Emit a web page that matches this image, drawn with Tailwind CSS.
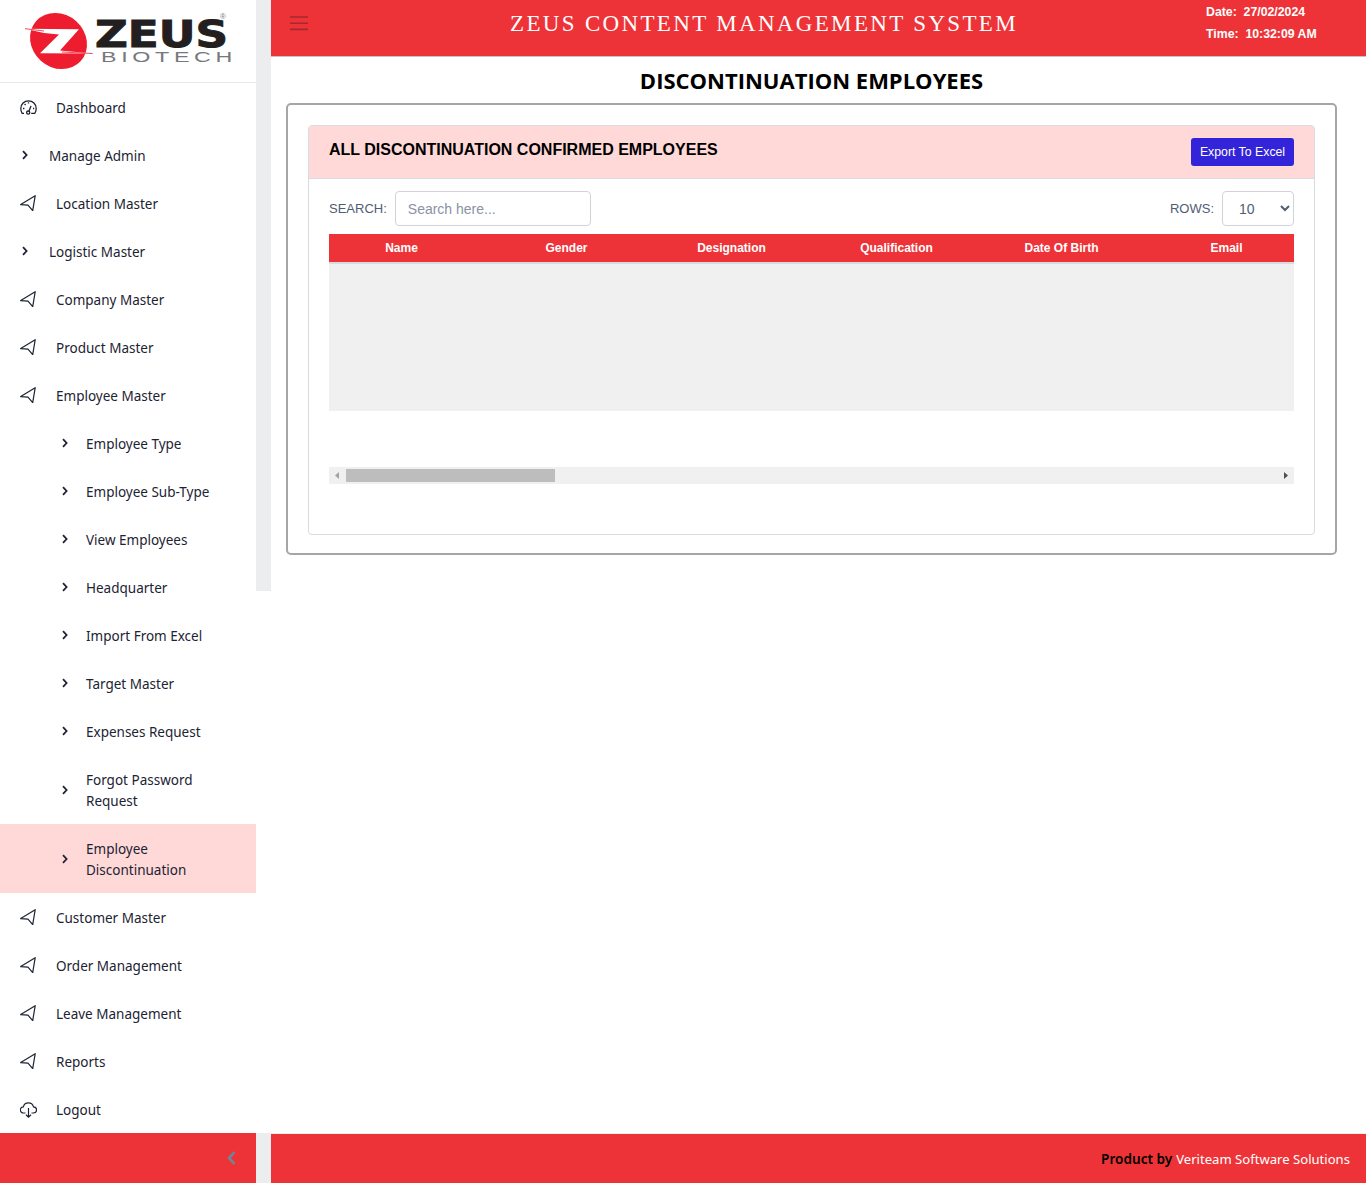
<!DOCTYPE html>
<html lang="en">
<head>
    <meta charset="UTF-8">
    <meta name="viewport" content="width=device-width, initial-scale=1.0">
    <title>Discontinuation Employees</title>
    <script src="https://cdn.jsdelivr.net/npm/@tailwindcss/browser@4"></script>
</head>
<body class="bg-white font-['Noto_Sans',sans-serif]">
    <!-- shared icons -->
    <svg class="hidden">
        <symbol id="plane" viewBox="0 0 16 16"><path d="M15.2 .7 .7 9.6 8 10.2 12.7 15.6Z" fill="none" stroke="currentColor" stroke-width="1.2" stroke-linejoin="round"/></symbol>
        <symbol id="chev" viewBox="0 0 6 10"><path d="M1 1.2 4.6 5 1 8.8" fill="none" stroke="currentColor" stroke-width="1.8"/></symbol>
    </svg>

    <div class="flex h-[1183px] w-[1366px] overflow-hidden">
        <aside class="w-[256px] h-full flex flex-col text-[#1c2333] text-[13.5px] leading-[21px]">
            <div class="h-[83px] shrink-0 border-b border-[#e8e8e8]">
                <svg width="256" height="82" viewBox="0 0 256 82">
                    <ellipse cx="58.5" cy="41" rx="30" ry="26.5" transform="rotate(42 58.5 41)" fill="#ed1c2e"/>
                    <path d="M25 28.7 79 29.3 60 50.5 92.7 53.5 40 53.3 59 34.5 44 33Z" fill="#fff"/>
                    <path d="M25 28.7 44 31 M92.7 53.5 62 52" stroke="#ed1c2e" stroke-width=".8"/>
                    <text x="95" y="47" textLength="133" lengthAdjust="spacingAndGlyphs" font-family="DejaVu Sans" font-weight="700" font-size="37" fill="#231f20" stroke="#231f20" stroke-width="1">ZEUS</text>
                    <text x="101" y="62" textLength="136" lengthAdjust="spacingAndGlyphs" letter-spacing="3" font-family="Liberation Sans" font-size="15" fill="#77787b">BIOTECH</text>
                    <text x="220" y="19" font-family="Liberation Sans" font-size="8" fill="#777">®</text>
                </svg>
            </div>
            <nav class="flex-1 min-h-0 [&_span]:mt-[2px]">
                <a class="flex items-center h-[48px] pl-[20px]">
                    <svg class="w-[17px] h-[15px] mr-[19px]" viewBox="0 0 17 15" fill="none" stroke="currentColor" stroke-width="1.3"><path d="M4 13.3H2.2A9 8.6 0 0 1 .8 8.5a7.7 7.7 0 0 1 15.4 0 9 8.6 0 0 1-1.4 4.8h-3.6"/><circle cx="8.2" cy="12.6" r="1.6"/><path d="M9 11 11 6M3 8.5h1.4M4.6 4l1 1M8.5 2.2v1.4M13 8.5h1.2"/></svg>
                    <span>Dashboard</span>
                </a>
                <a class="flex items-center h-[48px] pl-[22px]"><svg class="w-[6px] h-[10px] mr-[21px]"><use href="#chev"/></svg><span>Manage Admin</span></a>
                <a class="flex items-center h-[48px] pl-[20px]"><svg class="w-[16px] h-[16px] mr-[20px]"><use href="#plane"/></svg><span>Location Master</span></a>
                <a class="flex items-center h-[48px] pl-[22px]"><svg class="w-[6px] h-[10px] mr-[21px]"><use href="#chev"/></svg><span>Logistic Master</span></a>
                <a class="flex items-center h-[48px] pl-[20px]"><svg class="w-[16px] h-[16px] mr-[20px]"><use href="#plane"/></svg><span>Company Master</span></a>
                <a class="flex items-center h-[48px] pl-[20px]"><svg class="w-[16px] h-[16px] mr-[20px]"><use href="#plane"/></svg><span>Product Master</span></a>
                <a class="flex items-center h-[48px] pl-[20px]"><svg class="w-[16px] h-[16px] mr-[20px]"><use href="#plane"/></svg><span>Employee Master</span></a>
                <a class="flex items-center h-[48px] pl-[62px]"><svg class="w-[6px] h-[10px] mr-[18px]"><use href="#chev"/></svg><span>Employee Type</span></a>
                <a class="flex items-center h-[48px] pl-[62px]"><svg class="w-[6px] h-[10px] mr-[18px]"><use href="#chev"/></svg><span>Employee Sub-Type</span></a>
                <a class="flex items-center h-[48px] pl-[62px]"><svg class="w-[6px] h-[10px] mr-[18px]"><use href="#chev"/></svg><span>View Employees</span></a>
                <a class="flex items-center h-[48px] pl-[62px]"><svg class="w-[6px] h-[10px] mr-[18px]"><use href="#chev"/></svg><span>Headquarter</span></a>
                <a class="flex items-center h-[48px] pl-[62px]"><svg class="w-[6px] h-[10px] mr-[18px]"><use href="#chev"/></svg><span>Import From Excel</span></a>
                <a class="flex items-center h-[48px] pl-[62px]"><svg class="w-[6px] h-[10px] mr-[18px]"><use href="#chev"/></svg><span>Target Master</span></a>
                <a class="flex items-center h-[48px] pl-[62px]"><svg class="w-[6px] h-[10px] mr-[18px]"><use href="#chev"/></svg><span>Expenses Request</span></a>
                <a class="flex items-center h-[69px] pl-[62px]"><svg class="w-[6px] h-[10px] mr-[18px]"><use href="#chev"/></svg><span>Forgot Password<br>Request</span></a>
                <a class="flex items-center h-[69px] pl-[62px] bg-[#ffd8d8]"><svg class="w-[6px] h-[10px] mr-[18px]"><use href="#chev"/></svg><span>Employee<br>Discontinuation</span></a>
                <a class="flex items-center h-[48px] pl-[20px]"><svg class="w-[16px] h-[16px] mr-[20px]"><use href="#plane"/></svg><span>Customer Master</span></a>
                <a class="flex items-center h-[48px] pl-[20px]"><svg class="w-[16px] h-[16px] mr-[20px]"><use href="#plane"/></svg><span>Order Management</span></a>
                <a class="flex items-center h-[48px] pl-[20px]"><svg class="w-[16px] h-[16px] mr-[20px]"><use href="#plane"/></svg><span>Leave Management</span></a>
                <a class="flex items-center h-[48px] pl-[20px]"><svg class="w-[16px] h-[16px] mr-[20px]"><use href="#plane"/></svg><span>Reports</span></a>
                <a class="flex items-center h-[48px] pl-[20px]">
                    <svg class="w-[17px] h-[17px] mr-[19px]" viewBox="0 0 17 17" fill="none" stroke="currentColor" stroke-width="1.2"><path d="M5.5 12H3.6A3.1 3.1 0 0 1 3.3 5.8 5.3 5.3 0 0 1 13.5 5.8 3.1 3.1 0 0 1 13.4 12H11.5M8.5 7V16.2M6 13.8 8.5 16.2 11 13.8"/></svg>
                    <span>Logout</span>
                </a>
            </nav>
            <div class="h-[50px] shrink-0 bg-[#ee3338] flex items-center justify-end pr-[20px] pb-[1px]">
                <svg width="9" height="14" viewBox="0 0 9 14" fill="none" stroke="#6f8696" stroke-width="2.6"><path d="M7.5 1.2 2 7l5.5 5.8"/></svg>
            </div>
        </aside>

        <!-- gutter between sidebar and page -->
        <div class="w-[15px] h-full flex flex-col">
            <div class="h-[591px] bg-[#ebedef]"></div>
            <div class="flex-1"></div>
            <div class="h-[50px] bg-[#ebedef]"></div>
        </div>

        <div class="flex-1 h-full flex flex-col min-w-0">
            <header class="h-[57px] shrink-0 bg-[#ee3338] border-b border-[#c4c4c4] flex items-start">
                <svg class="ml-[19px] mt-[16px]" width="18" height="15" viewBox="0 0 18 15" stroke="#a4282e" stroke-width="1.6"><path d="M0 1H18M0 7.2H18M0 13.4H18"/></svg>
                <div class="w-[507px] ml-[202px] h-[48px] leading-[48px] text-white text-center whitespace-nowrap font-['Liberation_Serif',serif] text-[23px] tracking-[2.33px]">ZEUS CONTENT MANAGEMENT SYSTEM</div>
                <div class="ml-[189px] font-['Liberation_Sans',sans-serif] font-bold text-white text-[12.3px] leading-[22px] pt-[1px]">
                    <div class="whitespace-pre">Date:  27/02/2024</div>
                    <div class="whitespace-pre">Time:  10:32:09 AM</div>
                </div>
            </header>

            <main class="flex-1 min-h-0 pl-[15px] pr-[29px]">
                <h1 class="h-[46px] flex items-center justify-center font-['Open_Sans',sans-serif] font-bold text-[22px] text-black">DISCONTINUATION EMPLOYEES</h1>
                <div class="h-[452px] border-2 border-[#a6a6a6] rounded-[5px] p-[20px] font-['Liberation_Sans',sans-serif]">
                    <div class="h-[410px] border border-[#d8dbe0] rounded-[4px] overflow-hidden">
                        <div class="h-[53px] bg-[#ffd8d8] border-b border-[#d8dbe0] flex items-center justify-between pl-[20px] pr-[20px]">
                            <h2 class="font-bold text-[16px] text-black mb-[5px]">ALL DISCONTINUATION CONFIRMED EMPLOYEES</h2>
                            <button class="w-[103px] h-[28px] bg-[#3323d9] rounded-[3px] text-white text-[12.3px]">Export To Excel</button>
                        </div>
                        <div class="px-[20px]">
                            <div class="flex items-center justify-between pt-[12px] h-[55px] pb-[8px]">
                                <div class="flex items-center gap-[8px] text-[13px] text-[#4f5d73]">
                                    <label>SEARCH:</label>
                                    <input type="text" placeholder="Search here..." class="w-[196px] h-[35px] px-[12px] border border-[#d0d3da] rounded-[4px] text-[14px] placeholder:text-[#8a93a2]">
                                </div>
                                <div class="flex items-center gap-[8px] text-[13px] text-[#4f5d73]">
                                    <label>ROWS:</label>
                                    <select class="w-[72px] h-[35px] pl-[12px] border border-[#d0d3da] rounded-[4px] text-[14px] bg-white"><option>10</option></select>
                                </div>
                            </div>
                            <div class="h-[177px] overflow-hidden bg-[#f0f0f0]">
                                <div class="h-[28px] bg-[#ee3338] flex -ml-[10px] text-white font-bold text-[12px] items-center whitespace-nowrap">
                                    <div class="w-[165px] shrink-0 text-center">Name</div>
                                    <div class="w-[165px] shrink-0 text-center">Gender</div>
                                    <div class="w-[165px] shrink-0 text-center">Designation</div>
                                    <div class="w-[165px] shrink-0 text-center">Qualification</div>
                                    <div class="w-[165px] shrink-0 text-center">Date Of Birth</div>
                                    <div class="w-[165px] shrink-0 text-center">Email</div>
                                </div>
                                <div class="h-[2px] bg-[#d8dbe0]"></div>
                            </div>
                            <div class="mt-[56px] h-[17px] bg-[#f0f0f0] flex items-center">
                                <svg class="ml-[6px] mr-[7px]" width="4" height="7" viewBox="0 0 4 7"><path d="M4 0V7L0 3.5Z" fill="#a3a3a3"/></svg>
                                <div class="w-[209px] h-[13px] bg-[#bdbdbd]"></div>
                                <svg class="ml-auto mr-[6px]" width="4" height="7" viewBox="0 0 4 7"><path d="M0 0V7L4 3.5Z" fill="#505050"/></svg>
                            </div>
                        </div>
                    </div>
                </div>
            </main>

            <footer class="h-[50px] shrink-0 bg-[#ee3338] border-t border-[#ebedef] flex items-center justify-end pr-[16px] text-white pt-[2px]">
                <b class="text-black font-semibold text-[13.6px] mr-[4px]">Product by</b><span class="text-[13.1px]">Veriteam Software Solutions</span>
            </footer>
        </div>
    </div>
</body>
</html>
